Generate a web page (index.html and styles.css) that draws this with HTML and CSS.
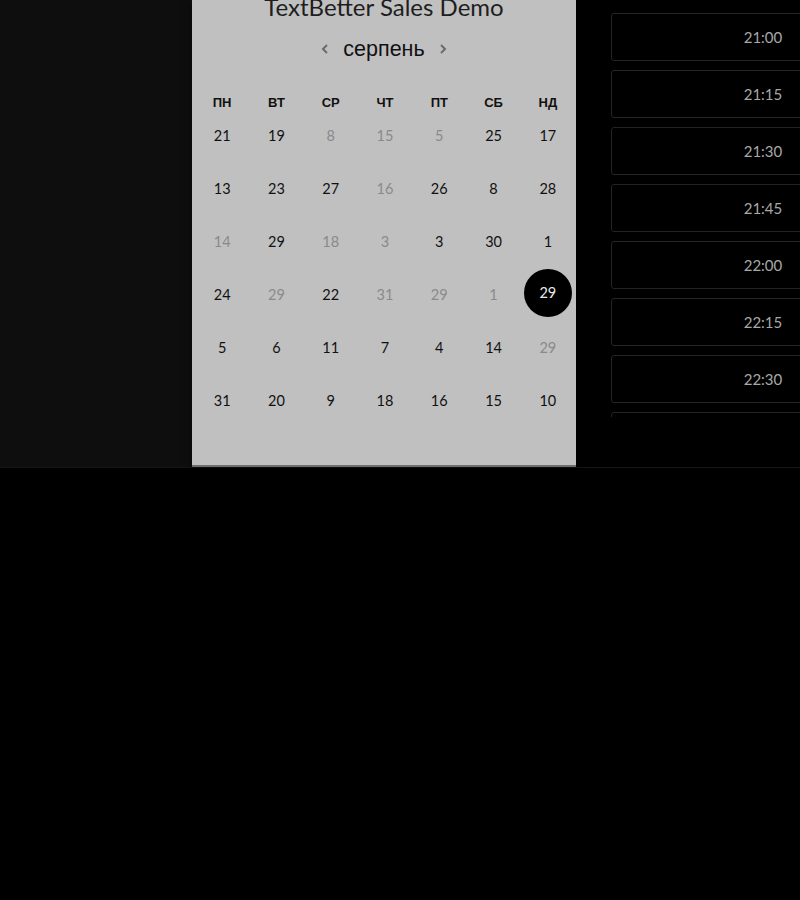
FILE: index.html
```html
<!DOCTYPE html>
<html lang="uk">
<head>
<meta charset="utf-8">
<title>TextBetter Sales Demo</title>
<link rel="stylesheet" href="styles.css">
</head>
<body>
<div class="screen">
  <aside class="side"></aside>
  <section class="cal">
    <h1 class="title">TextBetter Sales Demo</h1>
    <div class="month">
      <span class="chev">
        <svg width="8" height="12" viewBox="0 0 8 12"><path d="M6 2 L2 6 L6 10" fill="none" stroke="#6a6a6a" stroke-width="2"/></svg>
      </span>
      <span class="month-name">серпень</span>
      <span class="chev">
        <svg width="8" height="12" viewBox="0 0 8 12"><path d="M2 2 L6 6 L2 10" fill="none" stroke="#6a6a6a" stroke-width="2"/></svg>
      </span>
    </div>
    <div class="grid">
      <div class="wd">ПН</div><div class="wd">ВТ</div><div class="wd">СР</div><div class="wd">ЧТ</div><div class="wd">ПТ</div><div class="wd">СБ</div><div class="wd">НД</div>

      <div class="d">21</div><div class="d">19</div><div class="d off">8</div><div class="d off">15</div><div class="d off">5</div><div class="d">25</div><div class="d">17</div>

      <div class="d">13</div><div class="d">23</div><div class="d">27</div><div class="d off">16</div><div class="d">26</div><div class="d">8</div><div class="d">28</div>

      <div class="d off">14</div><div class="d">29</div><div class="d off">18</div><div class="d off">3</div><div class="d">3</div><div class="d">30</div><div class="d">1</div>

      <div class="d">24</div><div class="d off">29</div><div class="d">22</div><div class="d off">31</div><div class="d off">29</div><div class="d off">1</div><div class="d"><span class="sel">29</span></div>

      <div class="d">5</div><div class="d">6</div><div class="d">11</div><div class="d">7</div><div class="d">4</div><div class="d">14</div><div class="d off">29</div>

      <div class="d">31</div><div class="d">20</div><div class="d">9</div><div class="d">18</div><div class="d">16</div><div class="d">15</div><div class="d">10</div>
    </div>
  </section>
  <section class="times">
    <div class="slots">
      <div class="slot">21:00</div>
      <div class="slot">21:15</div>
      <div class="slot">21:30</div>
      <div class="slot">21:45</div>
      <div class="slot">22:00</div>
      <div class="slot">22:15</div>
      <div class="slot">22:30</div>
      <div class="slot"></div>
    </div>
  </section>
</div>
</body>
</html>
```

FILE: styles.css
```css
html, body {
  margin: 0;
  padding: 0;
  background: #000;
}

.screen {
  display: flex;
  height: 467px;
  border-bottom: 1px solid #161616;
  box-shadow: 0 4px 8px rgba(0,0,0,0.6);
}

.side {
  width: 192px;
  background: #0e0e0e;
}

.cal {
  width: 384px;
  background: #c0c0c0;
  overflow: hidden;
  border-bottom: 2px solid #6e6e6e;
  box-sizing: border-box;
  box-shadow: 0 3px 8px rgba(0,0,0,0.5);
}

.title {
  margin: -8px 0 0;
  font-family: Lato, "Open Sans", sans-serif;
  font-weight: 400;
  font-size: 24px;
  line-height: 30px;
  color: #1e1e1e;
  text-align: center;
}

.month {
  display: flex;
  justify-content: center;
  align-items: center;
  gap: 14px;
  margin-top: 13px;
  height: 28px;
}

.chev {
  display: flex;
  align-items: center;
}

.month-name {
  font-family: "Liberation Sans", Arial, sans-serif;
  font-size: 21.5px;
  color: #111;
}

.grid {
  display: grid;
  grid-template-columns: repeat(7, 1fr);
  padding: 0 1px 0 3px;
  margin-top: 30px;
  font-family: "Liberation Sans", Arial, sans-serif;
}

.wd {
  text-align: center;
  font-weight: 700;
  font-size: 13px;
  color: #111;
  height: 20px;
  line-height: 20px;
}

.d {
  height: 53px;
  display: flex;
  justify-content: center;
  align-items: flex-start;
  padding-top: 13px;
  box-sizing: border-box;
  font-family: Lato, "Open Sans", sans-serif;
  font-size: 14.5px;
  color: #111;
  line-height: 20px;
}

.d.off {
  color: #8a8a8a;
}

.sel {
  width: 48px;
  height: 48px;
  border-radius: 50%;
  background: #000;
  color: #e8e8e8;
  display: flex;
  align-items: center;
  justify-content: center;
  margin-top: -16px;
  line-height: 1;
  font-weight: 400;
}

.times {
  flex: 1;
  overflow: hidden;
  padding-left: 35px;
  background: #000;
}

.slots {
  height: 417px;
  overflow: hidden;
  padding-top: 13px;
  box-sizing: border-box;
  display: flex;
  flex-direction: column;
  gap: 9px;
}

.slot {
  flex: 0 0 48px;
  width: 304px;
  box-sizing: border-box;
  border: 1px solid #242424;
  border-radius: 3px;
  display: flex;
  align-items: center;
  justify-content: center;
  font-family: Lato, "Open Sans", sans-serif;
  font-size: 15px;
  color: #a8a8a8;
}
```
